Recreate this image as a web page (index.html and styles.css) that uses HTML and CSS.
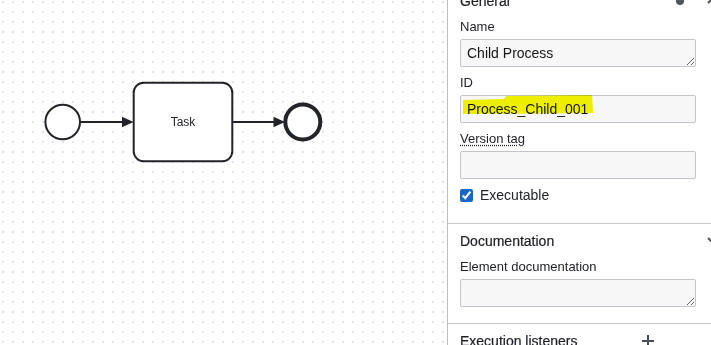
FILE: index.html
```html
<!DOCTYPE html>
<html lang="en">
<head>
  <meta charset="UTF-8" />
  <title>Process properties</title>
  <link rel="stylesheet" href="styles.css">
</head>
<body>
  <div class="app">
    <div class="canvas">
      <svg class="diagram" width="447" height="345" viewBox="0 0 447 345">
        <circle cx="62.7" cy="122" r="17.3" fill="#fff" stroke="#22242a" stroke-width="2"/>
        <line x1="80" y1="122" x2="124" y2="122" stroke="#22242a" stroke-width="2"/>
        <polygon points="122,116.7 133.5,122 122,127.3" fill="#22242a"/>
        <rect x="133.7" y="82.7" width="98.6" height="78.6" rx="10" fill="#fff" stroke="#22242a" stroke-width="2"/>
        <text x="183" y="126" text-anchor="middle" class="task-label">Task</text>
        <line x1="233" y1="122" x2="276" y2="122" stroke="#22242a" stroke-width="2"/>
        <polygon points="273.5,116.7 285,122 273.5,127.3" fill="#22242a"/>
        <circle cx="302.8" cy="122" r="17.5" fill="#fff" stroke="#22242a" stroke-width="4"/>
      </svg>
    </div>

    <div class="panel">
      <div class="groups">
        <div class="group">
          <div class="group-header">
            <span class="group-title">General</span>
            <span class="data-dot"></span>
            <svg class="arrow" width="16" height="16" viewBox="0 0 16 16"><path d="M2 10 L8 4 L14 10" fill="none" stroke="#52555f" stroke-width="2"/></svg>
          </div>
          <div class="entry">
            <label class="entry-label">Name</label>
            <textarea class="field area" rows="1">Child Process</textarea>
          </div>
          <div class="entry">
            <label class="entry-label">ID</label>
            <div class="field-wrap">
              <input class="field" type="text" value="Process_Child_001">
              <svg class="marker" width="136" height="22" viewBox="0 0 136 22">
                <polygon points="3,5 44,4 46,1 132,0 133,18 3,19" fill="#f6f600"/>
              </svg>
            </div>
          </div>
          <div class="entry">
            <label class="entry-label"><span class="tip">Version tag</span></label>
            <input class="field" type="text" value="">
          </div>
          <div class="entry check-entry">
            <input type="checkbox" id="exec" checked>
            <label for="exec">Executable</label>
          </div>
        </div>

        <div class="group">
          <div class="group-header">
            <span class="group-title">Documentation</span>
            <svg class="arrow" width="16" height="16" viewBox="0 0 16 16"><path d="M2 5 L8 11 L14 5" fill="none" stroke="#52555f" stroke-width="2"/></svg>
          </div>
          <div class="entry">
            <label class="entry-label">Element documentation</label>
            <textarea class="field area" rows="1"></textarea>
          </div>
        </div>

        <div class="group">
          <div class="group-header">
            <span class="group-title">Execution listeners</span>
            <svg class="add" width="12" height="12" viewBox="0 0 12 12"><path d="M6 0 V12 M0 6 H12" stroke="#4c4f5b" stroke-width="2"/></svg>
          </div>
        </div>
      </div>
    </div>
  </div>
</body>
</html>
```

FILE: styles.css
```css
body {
  margin: 0;
  font-family: 'Liberation Sans', Arial, sans-serif;
  color: #22242a;
  background: #fff;
}
.app {
  display: flex;
  width: 711px;
  height: 345px;
  overflow: hidden;
}
.canvas {
  position: relative;
  width: 447px;
  flex-shrink: 0;
  background-image: radial-gradient(circle, #d6d6da 0.6px, transparent 0.9px);
  background-size: 10px 10px;
  background-position: -2px -3px;
}
.diagram {
  position: absolute;
  top: 0;
  left: 0;
}
.task-label {
  font-family: 'Liberation Sans', Arial, sans-serif;
  font-size: 12px;
  fill: #22242a;
}
.panel {
  width: 279px;
  flex-shrink: 0;
  border-left: 1px solid #bdbdc9;
  box-sizing: border-box;
  background: #fff;
}
.groups {
  margin-top: -16px;
}
.group {
  border-bottom: 1px solid #c8c9cf;
  padding-bottom: 9px;
}
.group:first-child {
  padding-bottom: 12px;
}
.group:last-child {
  border-bottom: none;
}
.group-header {
  display: flex;
  align-items: center;
  height: 34px;
  padding: 0 4px 0 12px;
}
.group-title {
  flex: 1;
  font-size: 14px;
  color: #1d1f25;
  -webkit-text-stroke: 0.2px #1d1f25;
}
.data-dot {
  width: 8px;
  height: 8px;
  border-radius: 50%;
  background: #52555f;
  margin-right: 22px;
}
.add {
  margin-right: 68px;
}
.entry {
  padding: 0 16px 0 12px;
  margin-bottom: 7px;
}
.entry-label {
  display: block;
  font-size: 13px;
  line-height: 18px;
  margin-bottom: 3px;
  color: #22242a;
}
.tip {
  text-decoration: underline dotted;
  text-underline-offset: 2px;
}
.field {
  display: block;
  box-sizing: border-box;
  width: 236px;
  height: 28px;
  margin: 0;
  padding: 3px 6px;
  border: 1px solid #c4c5cc;
  border-radius: 2px;
  background: #f7f7f8;
  font-family: 'Liberation Sans', Arial, sans-serif;
  font-size: 14px;
  line-height: 20px;
  color: #161616;
}
.area {
  resize: vertical;
  overflow: hidden;
}
.field-wrap {
  position: relative;
}
.marker {
  position: absolute;
  left: 0;
  top: 0;
  mix-blend-mode: multiply;
}
.check-entry {
  display: flex;
  align-items: center;
  gap: 7px;
  height: 18px;
  font-size: 14px;
}
.check-entry input {
  width: 13px;
  height: 13px;
  margin: 0;
  accent-color: #1a66c6;
}
```
